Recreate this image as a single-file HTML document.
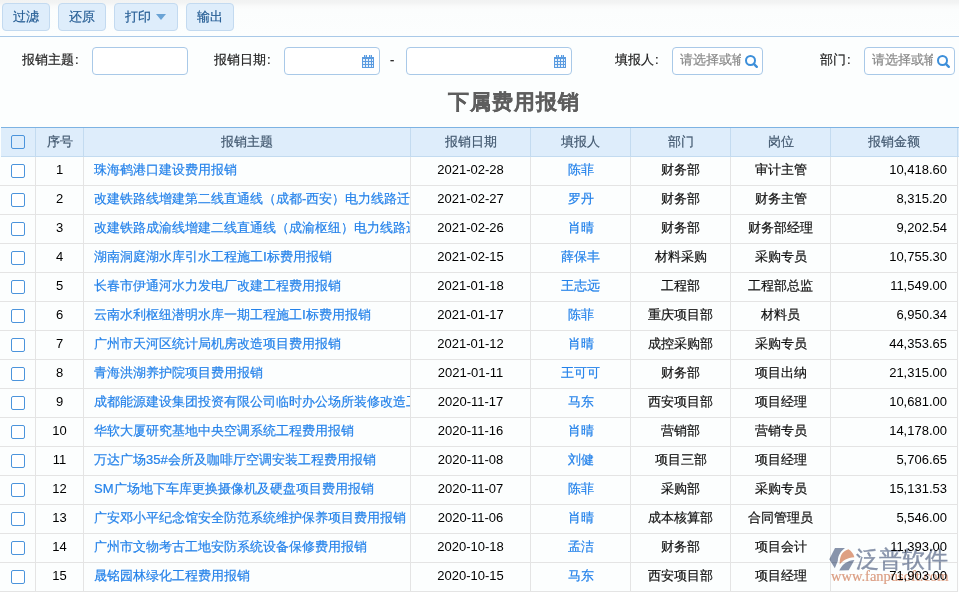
<!DOCTYPE html>
<html><head><meta charset="utf-8">
<style>
*{box-sizing:border-box;margin:0;padding:0}
html,body{width:959px;height:592px;overflow:hidden;background:#fcfefe;font-family:"Liberation Sans",sans-serif;font-size:13px;color:#111;-webkit-text-stroke:0.2px currentColor}
.abs{position:absolute}
#tb{position:absolute;left:0;top:0;width:959px;height:37px;background:linear-gradient(#f1f2f2 0,#f3f4f4 3px,#f9fafa 6px,#fbfdfd 10px,#fcfefe 36px);border-bottom:1px solid #a9c9e8}
.btn{position:absolute;top:3px;height:28px;background:#deedfb;border:1px solid #c3daf0;border-radius:4px;color:#255d94;line-height:26px;text-align:center}
.lbl{position:absolute;top:51px;line-height:18px;color:#222}
.inp{position:absolute;top:47px;height:28px;border:1px solid #a9c9e8;border-radius:4px;background:#fff}
.ph{position:absolute;left:7px;top:0;line-height:24px;color:#888;white-space:nowrap;overflow:hidden;width:61px}
#title{position:absolute;left:448px;top:88px;font-size:21px;letter-spacing:1.1px;font-weight:bold;color:#5e5e5e;line-height:28px;white-space:nowrap}
#hdr{position:absolute;left:1px;top:127px;width:958px;height:30px;background:#deedfb;border-top:1px solid #7db3e3;border-bottom:1px solid #c3dbf0}
.hc{position:absolute;top:0;height:28px;line-height:28px;text-align:center;color:#42586f;border-right:1px solid #c3dbf0}
.row{position:absolute;left:0;width:958px;height:29px;border-bottom:1px solid #e4e4e4}
.c{position:absolute;top:0;height:28px;line-height:26px;white-space:nowrap;overflow:hidden;border-right:1px solid #e4e4e4}
.ctr{text-align:center}
.nm{color:#2482ea}
.lnk{color:#2482ea;padding-left:10px}
.amt{text-align:right;padding-right:10px}
.num{-webkit-text-stroke:0;color:#000}
.cb{position:absolute;left:11px;width:14px;height:14px;border:1.5px solid #4b94dc;border-radius:2px;background:#fff}
</style></head><body>
<div id="tb">
  <div class="btn" style="left:2px;width:48px">过滤</div>
  <div class="btn" style="left:58px;width:48px">还原</div>
  <div class="btn" style="left:114px;width:64px;text-align:left;padding-left:10px">打印<span style="position:absolute;left:41px;top:10px;width:0;height:0;border-left:5px solid transparent;border-right:5px solid transparent;border-top:6px solid #6aa3d5"></span></div>
  <div class="btn" style="left:186px;width:48px">输出</div>
</div>

<div class="lbl" style="left:22px">报销主题<span style="margin-left:1px">:</span></div>
<div class="inp" style="left:92px;width:96px"></div>
<div class="lbl" style="left:214px">报销日期<span style="margin-left:1px">:</span></div>
<div class="inp" style="left:284px;width:96px"><svg class="abs" style="left:77px;top:7px" width="12" height="13" viewBox="0 0 12 13" shape-rendering="crispEdges"><rect x="0" y="2" width="12" height="11" fill="#5a9be0"/><rect x="2" y="0" width="3" height="3" fill="#5a9be0"/><rect x="7" y="0" width="3" height="3" fill="#5a9be0"/><rect x="3" y="0" width="1" height="2" fill="#b9d6f3"/><rect x="8" y="0" width="1" height="2" fill="#b9d6f3"/><g fill="#e6f0fb"><rect x="1" y="4" width="2" height="2"/><rect x="4" y="4" width="2" height="2"/><rect x="7" y="4" width="2" height="2"/><rect x="10" y="4" width="1" height="2"/><rect x="1" y="7" width="2" height="2"/><rect x="4" y="7" width="2" height="2"/><rect x="7" y="7" width="2" height="2"/><rect x="10" y="7" width="1" height="2"/><rect x="1" y="10" width="2" height="2"/><rect x="4" y="10" width="2" height="2"/><rect x="7" y="10" width="2" height="2"/><rect x="10" y="10" width="1" height="2"/></g></svg></div>
<div class="lbl" style="left:390px">-</div>
<div class="inp" style="left:406px;width:166px"><svg class="abs" style="left:147px;top:7px" width="12" height="13" viewBox="0 0 12 13" shape-rendering="crispEdges"><rect x="0" y="2" width="12" height="11" fill="#5a9be0"/><rect x="2" y="0" width="3" height="3" fill="#5a9be0"/><rect x="7" y="0" width="3" height="3" fill="#5a9be0"/><rect x="3" y="0" width="1" height="2" fill="#b9d6f3"/><rect x="8" y="0" width="1" height="2" fill="#b9d6f3"/><g fill="#e6f0fb"><rect x="1" y="4" width="2" height="2"/><rect x="4" y="4" width="2" height="2"/><rect x="7" y="4" width="2" height="2"/><rect x="10" y="4" width="1" height="2"/><rect x="1" y="7" width="2" height="2"/><rect x="4" y="7" width="2" height="2"/><rect x="7" y="7" width="2" height="2"/><rect x="10" y="7" width="1" height="2"/><rect x="1" y="10" width="2" height="2"/><rect x="4" y="10" width="2" height="2"/><rect x="7" y="10" width="2" height="2"/><rect x="10" y="10" width="1" height="2"/></g></svg></div>
<div class="lbl" style="left:615px">填报人<span style="margin-left:1px">:</span></div>
<div class="inp" style="left:672px;width:91px"><div class="ph">请选择或输入</div><svg class="abs" style="left:71px;top:6px" width="16" height="16" viewBox="0 0 16 16"><circle cx="6.5" cy="6.5" r="4.5" fill="none" stroke="#3d8fda" stroke-width="2"/><path d="M9.8 9.8L12.8 12.8" stroke="#3d8fda" stroke-width="2.4" stroke-linecap="round"/></svg></div>
<div class="lbl" style="left:820px">部门<span style="margin-left:1px">:</span></div>
<div class="inp" style="left:864px;width:91px"><div class="ph">请选择或输入</div><svg class="abs" style="left:71px;top:6px" width="16" height="16" viewBox="0 0 16 16"><circle cx="6.5" cy="6.5" r="4.5" fill="none" stroke="#3d8fda" stroke-width="2"/><path d="M9.8 9.8L12.8 12.8" stroke="#3d8fda" stroke-width="2.4" stroke-linecap="round"/></svg></div>

<div id="title">下属费用报销</div>

<div id="hdr">
  <div class="hc" style="left:0;width:35px"><div class="cb" style="left:10px;top:7px;background:transparent"></div></div>
  <div class="hc" style="left:35px;width:48px">序号</div>
  <div class="hc" style="left:83px;width:327px">报销主题</div>
  <div class="hc" style="left:410px;width:120px">报销日期</div>
  <div class="hc" style="left:530px;width:100px">填报人</div>
  <div class="hc" style="left:630px;width:100px">部门</div>
  <div class="hc" style="left:730px;width:100px">岗位</div>
  <div class="hc" style="left:830px;width:127px">报销金额</div>
</div>
<div id="body">
<div class="row" style="top:157px"><div class="c" style="left:0;width:36px"><div class="cb" style="top:7px"></div></div><div class="c ctr num" style="left:36px;width:48px">1</div><div class="c lnk" style="left:84px;width:327px">珠海鹤港口建设费用报销</div><div class="c ctr num" style="left:411px;width:120px">2021-02-28</div><div class="c ctr nm" style="left:531px;width:100px">陈菲</div><div class="c ctr" style="left:631px;width:100px">财务部</div><div class="c ctr" style="left:731px;width:100px">审计主管</div><div class="c amt num" style="left:831px;width:127px">10,418.60</div></div>
<div class="row" style="top:186px"><div class="c" style="left:0;width:36px"><div class="cb" style="top:7px"></div></div><div class="c ctr num" style="left:36px;width:48px">2</div><div class="c lnk" style="left:84px;width:327px">改建铁路线增建第二线直通线（成都-西安）电力线路迁改工程费用报销</div><div class="c ctr num" style="left:411px;width:120px">2021-02-27</div><div class="c ctr nm" style="left:531px;width:100px">罗丹</div><div class="c ctr" style="left:631px;width:100px">财务部</div><div class="c ctr" style="left:731px;width:100px">财务主管</div><div class="c amt num" style="left:831px;width:127px">8,315.20</div></div>
<div class="row" style="top:215px"><div class="c" style="left:0;width:36px"><div class="cb" style="top:7px"></div></div><div class="c ctr num" style="left:36px;width:48px">3</div><div class="c lnk" style="left:84px;width:327px">改建铁路成渝线增建二线直通线（成渝枢纽）电力线路迁改工程费用报销</div><div class="c ctr num" style="left:411px;width:120px">2021-02-26</div><div class="c ctr nm" style="left:531px;width:100px">肖晴</div><div class="c ctr" style="left:631px;width:100px">财务部</div><div class="c ctr" style="left:731px;width:100px">财务部经理</div><div class="c amt num" style="left:831px;width:127px">9,202.54</div></div>
<div class="row" style="top:244px"><div class="c" style="left:0;width:36px"><div class="cb" style="top:7px"></div></div><div class="c ctr num" style="left:36px;width:48px">4</div><div class="c lnk" style="left:84px;width:327px">湖南洞庭湖水库引水工程施工Ⅰ标费用报销</div><div class="c ctr num" style="left:411px;width:120px">2021-02-15</div><div class="c ctr nm" style="left:531px;width:100px">薛保丰</div><div class="c ctr" style="left:631px;width:100px">材料采购</div><div class="c ctr" style="left:731px;width:100px">采购专员</div><div class="c amt num" style="left:831px;width:127px">10,755.30</div></div>
<div class="row" style="top:273px"><div class="c" style="left:0;width:36px"><div class="cb" style="top:7px"></div></div><div class="c ctr num" style="left:36px;width:48px">5</div><div class="c lnk" style="left:84px;width:327px">长春市伊通河水力发电厂改建工程费用报销</div><div class="c ctr num" style="left:411px;width:120px">2021-01-18</div><div class="c ctr nm" style="left:531px;width:100px">王志远</div><div class="c ctr" style="left:631px;width:100px">工程部</div><div class="c ctr" style="left:731px;width:100px">工程部总监</div><div class="c amt num" style="left:831px;width:127px">11,549.00</div></div>
<div class="row" style="top:302px"><div class="c" style="left:0;width:36px"><div class="cb" style="top:7px"></div></div><div class="c ctr num" style="left:36px;width:48px">6</div><div class="c lnk" style="left:84px;width:327px">云南水利枢纽潜明水库一期工程施工Ⅰ标费用报销</div><div class="c ctr num" style="left:411px;width:120px">2021-01-17</div><div class="c ctr nm" style="left:531px;width:100px">陈菲</div><div class="c ctr" style="left:631px;width:100px">重庆项目部</div><div class="c ctr" style="left:731px;width:100px">材料员</div><div class="c amt num" style="left:831px;width:127px">6,950.34</div></div>
<div class="row" style="top:331px"><div class="c" style="left:0;width:36px"><div class="cb" style="top:7px"></div></div><div class="c ctr num" style="left:36px;width:48px">7</div><div class="c lnk" style="left:84px;width:327px">广州市天河区统计局机房改造项目费用报销</div><div class="c ctr num" style="left:411px;width:120px">2021-01-12</div><div class="c ctr nm" style="left:531px;width:100px">肖晴</div><div class="c ctr" style="left:631px;width:100px">成控采购部</div><div class="c ctr" style="left:731px;width:100px">采购专员</div><div class="c amt num" style="left:831px;width:127px">44,353.65</div></div>
<div class="row" style="top:360px"><div class="c" style="left:0;width:36px"><div class="cb" style="top:7px"></div></div><div class="c ctr num" style="left:36px;width:48px">8</div><div class="c lnk" style="left:84px;width:327px">青海洪湖养护院项目费用报销</div><div class="c ctr num" style="left:411px;width:120px">2021-01-11</div><div class="c ctr nm" style="left:531px;width:100px">王可可</div><div class="c ctr" style="left:631px;width:100px">财务部</div><div class="c ctr" style="left:731px;width:100px">项目出纳</div><div class="c amt num" style="left:831px;width:127px">21,315.00</div></div>
<div class="row" style="top:389px"><div class="c" style="left:0;width:36px"><div class="cb" style="top:7px"></div></div><div class="c ctr num" style="left:36px;width:48px">9</div><div class="c lnk" style="left:84px;width:327px">成都能源建设集团投资有限公司临时办公场所装修改造工程费用报销</div><div class="c ctr num" style="left:411px;width:120px">2020-11-17</div><div class="c ctr nm" style="left:531px;width:100px">马东</div><div class="c ctr" style="left:631px;width:100px">西安项目部</div><div class="c ctr" style="left:731px;width:100px">项目经理</div><div class="c amt num" style="left:831px;width:127px">10,681.00</div></div>
<div class="row" style="top:418px"><div class="c" style="left:0;width:36px"><div class="cb" style="top:7px"></div></div><div class="c ctr num" style="left:36px;width:48px">10</div><div class="c lnk" style="left:84px;width:327px">华软大厦研究基地中央空调系统工程费用报销</div><div class="c ctr num" style="left:411px;width:120px">2020-11-16</div><div class="c ctr nm" style="left:531px;width:100px">肖晴</div><div class="c ctr" style="left:631px;width:100px">营销部</div><div class="c ctr" style="left:731px;width:100px">营销专员</div><div class="c amt num" style="left:831px;width:127px">14,178.00</div></div>
<div class="row" style="top:447px"><div class="c" style="left:0;width:36px"><div class="cb" style="top:7px"></div></div><div class="c ctr num" style="left:36px;width:48px">11</div><div class="c lnk" style="left:84px;width:327px">万达广场35#会所及咖啡厅空调安装工程费用报销</div><div class="c ctr num" style="left:411px;width:120px">2020-11-08</div><div class="c ctr nm" style="left:531px;width:100px">刘健</div><div class="c ctr" style="left:631px;width:100px">项目三部</div><div class="c ctr" style="left:731px;width:100px">项目经理</div><div class="c amt num" style="left:831px;width:127px">5,706.65</div></div>
<div class="row" style="top:476px"><div class="c" style="left:0;width:36px"><div class="cb" style="top:7px"></div></div><div class="c ctr num" style="left:36px;width:48px">12</div><div class="c lnk" style="left:84px;width:327px">SM广场地下车库更换摄像机及硬盘项目费用报销</div><div class="c ctr num" style="left:411px;width:120px">2020-11-07</div><div class="c ctr nm" style="left:531px;width:100px">陈菲</div><div class="c ctr" style="left:631px;width:100px">采购部</div><div class="c ctr" style="left:731px;width:100px">采购专员</div><div class="c amt num" style="left:831px;width:127px">15,131.53</div></div>
<div class="row" style="top:505px"><div class="c" style="left:0;width:36px"><div class="cb" style="top:7px"></div></div><div class="c ctr num" style="left:36px;width:48px">13</div><div class="c lnk" style="left:84px;width:327px">广安邓小平纪念馆安全防范系统维护保养项目费用报销</div><div class="c ctr num" style="left:411px;width:120px">2020-11-06</div><div class="c ctr nm" style="left:531px;width:100px">肖晴</div><div class="c ctr" style="left:631px;width:100px">成本核算部</div><div class="c ctr" style="left:731px;width:100px">合同管理员</div><div class="c amt num" style="left:831px;width:127px">5,546.00</div></div>
<div class="row" style="top:534px"><div class="c" style="left:0;width:36px"><div class="cb" style="top:7px"></div></div><div class="c ctr num" style="left:36px;width:48px">14</div><div class="c lnk" style="left:84px;width:327px">广州市文物考古工地安防系统设备保修费用报销</div><div class="c ctr num" style="left:411px;width:120px">2020-10-18</div><div class="c ctr nm" style="left:531px;width:100px">孟洁</div><div class="c ctr" style="left:631px;width:100px">财务部</div><div class="c ctr" style="left:731px;width:100px">项目会计</div><div class="c amt num" style="left:831px;width:127px">11,393.00</div></div>
<div class="row" style="top:563px"><div class="c" style="left:0;width:36px"><div class="cb" style="top:7px"></div></div><div class="c ctr num" style="left:36px;width:48px">15</div><div class="c lnk" style="left:84px;width:327px">晟铭园林绿化工程费用报销</div><div class="c ctr num" style="left:411px;width:120px">2020-10-15</div><div class="c ctr nm" style="left:531px;width:100px">马东</div><div class="c ctr" style="left:631px;width:100px">西安项目部</div><div class="c ctr" style="left:731px;width:100px">项目经理</div><div class="c amt num" style="left:831px;width:127px">71,903.00</div></div>
</div>
<div id="wm" style="position:absolute;left:0;top:0;width:959px;height:592px;pointer-events:none;mix-blend-mode:multiply">
<svg class="abs" style="left:826px;top:545px" width="32" height="28" viewBox="0 0 32 28"><path d="M9,3 L19,3 C15,6 12,10 11.8,16 L8.8,23.2 L3.3,14.2 Z" fill="#8a95ac"/><path d="M13.7,19.4 C13.5,12 15.5,6.5 22.5,4.3 C25.5,6 27.5,9 28.4,12.3 C21,13 17,15.5 13.7,19.4 Z" fill="#e1a184"/><path d="M13.2,25.5 L22.7,25.3 L28.4,14.9 C22,15.5 17,18 13.2,25.5 Z" fill="#8a95ac"/></svg>
<div class="abs" style="left:856px;top:544px;font-size:23px;line-height:30px;-webkit-text-stroke:0.4px #8893aa;color:#8893aa;white-space:nowrap">泛普软件</div>
<div class="abs" style="left:831px;top:568px;font-family:'Liberation Serif',serif;font-size:14.5px;line-height:16px;color:#de9f84;white-space:nowrap">www.fanpusoft.com</div>
</div>

</body></html>
